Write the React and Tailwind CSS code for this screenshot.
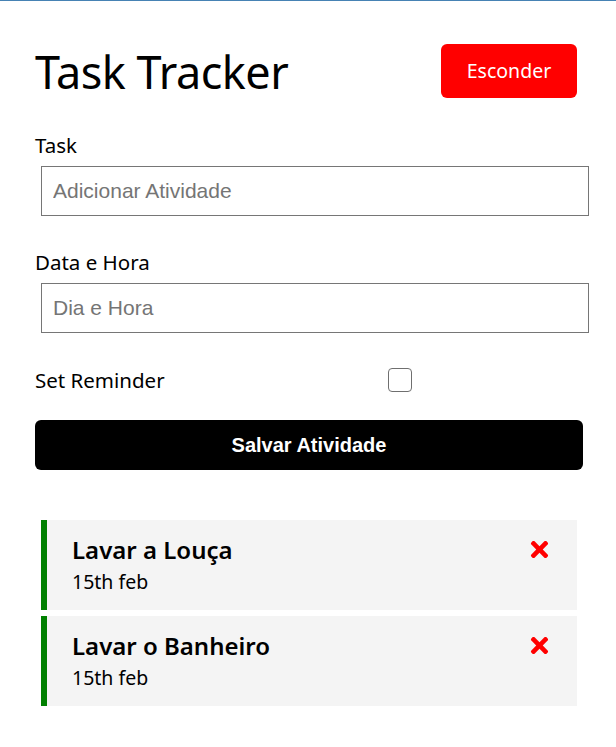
import React, { useState } from "react";
import { FaTimes } from "react-icons/fa";

const tasks = [
    { id: 1, text: "Lavar a Louça", day: "15th feb" },
    { id: 2, text: "Lavar o Banheiro", day: "15th feb" },
];

function App() {
    const [reminder, setReminder] = useState(false);

    return (
        <div className="min-h-[747px] bg-white border-t border-[#4682b4] font-['Noto_Sans',sans-serif] text-black">
            <div className="pl-[35px] pr-[33px] pt-[37px]">
                {/* header */}
                <header className="flex items-center justify-between mb-[26px]">
                    <h1 className="text-[45px] leading-none tracking-[-0.5px] font-normal">Task Tracker</h1>
                    <button className="m-[6px] w-[136px] h-[54px] bg-[#ff0000] text-white text-[19.5px] rounded-[6px]">
                        Esconder
                    </button>
                </header>

                {/* form */}
                <form onSubmit={(e) => e.preventDefault()}>
                    <div className="flex flex-col mb-[25px]">
                        <label className="block text-[20.5px] leading-[30px]">Task</label>
                        <input
                            type="text"
                            placeholder="Adicionar Atividade"
                            className="block my-[6px] ml-[6px] w-full h-[50px] border border-[#767676] px-[11px] text-[21px] font-['Liberation_Sans',sans-serif] placeholder:text-[#757575] outline-none"
                        />
                    </div>
                    <div className="flex flex-col mb-[25px]">
                        <label className="block text-[20.5px] leading-[30px]">Data e Hora</label>
                        <input
                            type="text"
                            placeholder="Dia e Hora"
                            className="block my-[6px] ml-[6px] w-full h-[50px] border border-[#767676] px-[11px] text-[21px] font-['Liberation_Sans',sans-serif] placeholder:text-[#757575] outline-none"
                        />
                    </div>
                    <div className="grid grid-cols-[1fr_2fr] items-center h-[32px]">
                        <label className="text-[20.5px] leading-[30px]">Set Reminder</label>
                        <div className="flex justify-center">
                            <button
                                type="button"
                                onClick={() => setReminder(!reminder)}
                                className="w-6 h-6 border-[1.5px] border-[#6f6f6f] rounded-[4px] bg-white"
                            />
                        </div>
                    </div>
                    <button
                        type="submit"
                        className="block w-full h-[50px] mt-6 bg-black text-white rounded-[6px] text-[20px] font-bold font-['Liberation_Sans',sans-serif]"
                    >
                        Salvar Atividade
                    </button>
                </form>

                {/* tasks */}
                <div className="flex flex-col gap-[6px] mt-[50px]">
                    {tasks.map((task) => (
                        <div
                            key={task.id}
                            className="mx-[6px] h-[90px] bg-[#f4f4f4] border-l-[6px] border-[#008000] pl-[25px] pr-[25px] py-[12px]"
                        >
                            <h3 className="flex items-center justify-between h-[35px] text-[24px] font-semibold leading-[35px]">
                                {task.text}
                                <FaTimes size={25} color="red" />
                            </h3>
                            <p className="text-[19.5px] leading-[30px]">{task.day}</p>
                        </div>
                    ))}
                </div>
            </div>
        </div>
    );
}

export default App;
